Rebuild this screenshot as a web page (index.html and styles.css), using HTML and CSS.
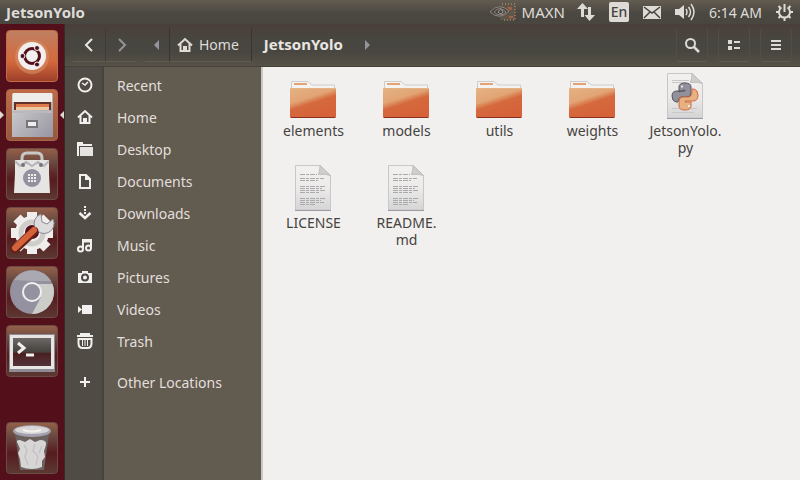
FILE: index.html
```html
<!DOCTYPE html>
<html lang="en">
<head>
<meta charset="utf-8">
<title>JetsonYolo</title>
<link rel="stylesheet" href="styles.css">
</head>
<body>
<svg class="defs" aria-hidden="true">
  <defs>
    <linearGradient id="fold" x1="0" y1="0" x2="0.5" y2="1">
      <stop offset="0" stop-color="#e5b284"/><stop offset=".42" stop-color="#e2a474"/><stop offset=".6" stop-color="#d5693d"/><stop offset="1" stop-color="#d5623a"/>
    </linearGradient>
    <linearGradient id="paper" x1="0" y1="0" x2="0" y2="1">
      <stop offset="0" stop-color="#f3f1f0"/><stop offset=".5" stop-color="#ecebea"/><stop offset="1" stop-color="#d6d5d6"/>
    </linearGradient>
    <linearGradient id="metal" x1="0" y1="0" x2="1" y2="1">
      <stop offset="0" stop-color="#d6d5d3"/><stop offset="1" stop-color="#9896a3"/>
    </linearGradient>
    <linearGradient id="term" x1="0" y1="0" x2="0" y2="1">
      <stop offset="0" stop-color="#6b6866"/><stop offset=".5" stop-color="#45423d"/><stop offset=".55" stop-color="#4a2020"/><stop offset="1" stop-color="#53323a"/>
    </linearGradient>
    <symbol id="folder" viewBox="0 0 48 48">
      <path d="M1.500 18V9.500H18l4 3.500H44.500V18" fill="#f4f3f2" stroke="#cfcdcb"/>
      <path d="M4 12h13" stroke="#e2a474" stroke-width="2"/>
      <rect x="0" y="16" width="46" height="30" rx="1" fill="url(#fold)"/>
      <path d="M1 45.500H45" stroke="#8a3020"/>
      <path d="M1 16.500H45" stroke="#e5b284"/>
    </symbol>
    <symbol id="sheet" viewBox="0 0 48 48">
      <path d="M5.500 1.500H30L40.500 11.500V46H5.500Z" fill="url(#paper)" stroke="#c9c7c7"/>
      <path d="M30 1.500q0 5-1.500 9q7-1 12 1Z" fill="#d0cecc" stroke="#c0bebd"/>
      <path d="M5 46.500H41" stroke="#9c9aa5"/>
    </symbol>
    <symbol id="textfile" viewBox="0 0 48 48">
      <use href="#sheet"/>
      <path d="M10 10.500H27M10 14.500H34M10 16.500H28M10 22.500H35M10 24.500H32M10 26.500H35M10 28.500H30M10 34.500H35M10 36.500H31M10 38.500H34M10 40.500H26" stroke="#aaa9ab" stroke-dasharray="5 1 3 1"/>
    </symbol>
    <symbol id="pyfile" viewBox="0 0 48 48">
      <use href="#sheet"/>
      <path d="M10 8.500H27M10 10.500H24M10 36.500H35M10 40.500H32" stroke="#c9c7c7"/>
      <path d="M17 20v-5q0-4 6-4t6 4v6q0 4-4 4h-5q-4 0-4 5h-2q-4-1-4-6 0-5 5-5h8v-1z" fill="#92909d" stroke="#57545a"/>
      <path d="M30 17h2q4 1 4 6 0 6-5 6h-8v1h6v4q0 4-6 4t-6-4v-5q0-4 4-4h5q4 0 4-5z" fill="#e5b284" stroke="#d5693d"/>
      <circle cx="20" cy="14.500" r="1" fill="#fff"/><circle cx="27" cy="34" r="1" fill="#fff"/>
    </symbol>
    <symbol id="house" viewBox="0 0 16 16">
      <path d="M1 8.500 8 2l7 6.500" fill="none" stroke="currentColor" stroke-width="2"/>
      <path d="M3.500 7v7h3.500v-4h2v4h3.500V7" fill="none" stroke="currentColor" stroke-width="2"/>
    </symbol>
  </defs>
</svg>

<header class="panel">
  <span class="panel-title">JetsonYolo</span>
  <div class="indicators">
    <svg class="nvidia" width="27" height="18" viewBox="0 0 27 18"><path d="M11 1h15v16H11z" fill="#5e554b"/><path d="M13 1h13v16H14" fill="none" stroke="#d99c70" stroke-dasharray="1 2"/><path d="M18 4h5v3h-3zM20 13h4v2h-4z" fill="#d5693d" opacity=".6"/><path d="M1 9Q10-1 20 8Q11 18 1 9ZM5 9Q11 2 17 9Q11 15 5 9Z" fill="#45423d" stroke="#928782"/><path d="M9 9q2-4 5-1-1 5-5 1" fill="none" stroke="#aaa09b"/></svg>
    <span class="power">MAXN</span>
    <svg class="network" width="18" height="18" viewBox="0 0 18 18"><path d="M5.500 0 11 6H7v8H4V6H0ZM12.500 18 7.500 12H11V4h3v8h4Z" fill="#dedbd7"/></svg>
    <span class="lang">En</span>
    <svg class="mail" width="18" height="13" viewBox="0 0 18 13"><path d="M0 0h18v13H0z" fill="#dedbd7"/><path d="m1 1 8 6 8-6M1 12l6-6M17 12l-6-6" fill="none" stroke="#45433e" stroke-width="1.500"/></svg>
    <svg class="sound" width="20" height="18" viewBox="0 0 20 18"><path d="M0 6h4l5-4v14l-5-4H0z" fill="#dedbd7"/><path d="M11 6q2 3 0 6M13.500 4q4 5 0 10M16 1q6 8 0 16" fill="none" stroke="#dedbd7" stroke-width="1.500"/></svg>
    <time>6:14 AM</time>
    <svg class="gear" width="17" height="18" viewBox="0 0 17 18"><path d="M5.500 4.500a5.500 5.500 0 1 0 6 0" fill="none" stroke="#dedbd7" stroke-width="2"/><path d="M8.500 1v8M0 9h3M14 9h3M8.500 14v4M2.500 3l2 2M14.500 3l-2 2M2.500 15l2-2M14.500 15l-2-2" stroke="#dedbd7" stroke-width="2"/></svg>
  </div>
</header>

<div class="desktop">
  <nav class="launcher" aria-label="Launcher">
    <button class="tile dash" aria-label="Search"><svg viewBox="0 0 52 52"><circle cx="26" cy="27" r="17" fill="#d99066" opacity=".6"/><circle cx="26" cy="26" r="14" fill="#f2f0ef"/><circle cx="26" cy="26" r="7.500" fill="none" stroke="#53101a" stroke-width="3"/><g fill="#53101a" stroke="#f2f0ef"><circle cx="16.500" cy="26" r="2.500"/><circle cx="31" cy="18" r="2.500"/><circle cx="31" cy="34.500" r="2.500"/></g></svg></button>
    <button class="tile files active" aria-label="Files"><svg viewBox="0 0 52 52"><path d="M6 6q0-2 2-2h37q2 0 2 2v42H6z" fill="url(#metal)"/><path d="M7 4h39v9H7z" fill="#efedeb"/><path d="M8 13h37v8H8z" fill="#63312b"/><path d="M10 15h33v5H10z" fill="#dd7b4b"/><path d="M10 18h33v3H10z" fill="#edc6a2"/><path d="M7 22h39v2H7z" fill="#bbb9bd"/><path d="M21 32h10v6H21z" fill="#efedeb" stroke="#77747a" stroke-width="2"/></svg></button>
    <button class="tile store" aria-label="Software"><svg viewBox="0 0 52 52"><path d="M16 16V10q0-5 5-5M36 16V10q0-5-5-5h-10" fill="none" stroke="#c9c7c7" stroke-width="3"/><path d="M9 12h34v13l1 20H8l1-20z" fill="#e7e5e3"/><path d="m9 13 5 5 6-4 6 4 6-4 6 4 5-5" fill="none" stroke="#b5b3b9" stroke-width="2"/><circle cx="17" cy="17" r="2" fill="#77747a"/><circle cx="35" cy="17" r="2" fill="#77747a"/><circle cx="26" cy="30" r="9" fill="#9391a0"/><path d="M22 26h2v2h-2zM25 26h2v2h-2zM28 26h2v2h-2zM22 29h2v2h-2zM25 29h2v2h-2zM28 29h2v2h-2zM22 32h2v2h-2zM25 32h2v2h-2zM28 32h2v2h-2z" fill="#f2f0ef"/></svg></button>
    <button class="tile settings" aria-label="System Settings"><svg viewBox="0 0 52 52"><g stroke="#f0eeec" stroke-width="10"><path d="M26 5v42M5 26h42M11 11l30 30M11 41 41 11"/></g><circle cx="26" cy="26" r="17" fill="#f0eeec"/><circle cx="26" cy="26" r="11" fill="none" stroke="#cfcdca" stroke-width="5"/><circle cx="26" cy="25" r="7" fill="#53101a"/><path d="m30 23 6-6" stroke="#c6c4ca" stroke-width="6"/><path d="M35 7a10 10 0 1 0 12 5l-6 5-5-2z" fill="#dddbdb" stroke="#8c8994"/><path d="M9 42 28 24" stroke="#672116" stroke-width="9" stroke-linecap="round"/><path d="M9 41 28 23" stroke="#d5623a" stroke-width="6" stroke-linecap="round"/></svg></button>
    <button class="tile browser" aria-label="Chromium"><svg viewBox="0 0 52 52"><circle cx="26" cy="26" r="22" fill="#9492a0"/><path d="M26 18h20.500A22 22 0 0 1 26 48l9-17z" fill="#ccccc8"/><path d="M8 14a22 22 0 0 1 37 1H26z" fill="#aaa8b0"/><circle cx="26" cy="26" r="9" fill="#94929f" stroke="#f2f0ef" stroke-width="2"/></svg></button>
    <button class="tile terminal" aria-label="Terminal"><svg viewBox="0 0 52 52"><path d="M3 9h46v38H3z" fill="#8e8b97"/><path d="M4 10h44v34H4z" fill="#e8e6e4"/><path d="M7 13h38v28H7z" fill="url(#term)"/><path d="m12 18 6 5-6 5M20 30h8" fill="none" stroke="#f2f0ef" stroke-width="3"/></svg></button>
    <button class="tile trash" aria-label="Trash"><svg viewBox="0 0 52 52"><path d="M9 12h34l-5 36H14z" fill="#6b625f"/><path d="M12 22q-3-4 2-4l5 2 5-3 5 3 5-2q7 0 6 5l-2 6 1 6-3 4v6q-10 4-21 0l-1-8-2-6 2-4z" fill="#d8d6d5"/><path d="m18 23 3 5-2 7 3 8M29 22l-2 7 5 5-2 9M36 24l-3 7" fill="none" stroke="#c4c2c6" stroke-width="1.500"/><ellipse cx="26" cy="9" rx="19" ry="6" fill="#a3a1ad"/><ellipse cx="26" cy="8" rx="17" ry="4" fill="#d7d5d6"/><path d="M17 8q9 3 18 0" fill="none" stroke="#f2f0ef" stroke-width="2"/></svg></button>
  </nav>

  <main class="window">
    <div class="toolbar">
      <button class="tool" aria-label="Back"><svg width="16" height="16" viewBox="0 0 16 16"><path d="m11 2-6 6 6 6" fill="none" stroke="#e9e6e2" stroke-width="2"/></svg></button>
      <button class="tool dim" aria-label="Forward"><svg width="16" height="16" viewBox="0 0 16 16"><path d="m5 2 6 6-6 6" fill="none" stroke="#96939c" stroke-width="2"/></svg></button>
      <div class="path">
        <button class="step" aria-label="Scroll left"><svg width="6" height="10" viewBox="0 0 6 10"><path d="M5 0v10L0 5z" fill="#96939c"/></svg></button>
        <button class="crumb"><svg width="16" height="16"><use href="#house"/></svg>Home</button>
        <button class="crumb current">JetsonYolo</button>
        <button class="step" aria-label="Scroll right"><svg width="6" height="10" viewBox="0 0 6 10"><path d="M1 0v10l5-5z" fill="#96939c"/></svg></button>
      </div>
      <div class="actions">
        <button class="tool" aria-label="Find"><svg width="16" height="16" viewBox="0 0 16 16"><circle cx="6.500" cy="6.500" r="4.500" fill="none" stroke="#dedbd7" stroke-width="2"/><path d="m10 10 5 5" stroke="#dedbd7" stroke-width="2.500"/></svg></button>
        <button class="tool" aria-label="List view"><svg width="14" height="16" viewBox="0 0 14 16"><path d="M1 3h4v4H1zM1 9h4v4H1zM7 4h6v2H7zM7 10h6v2H7z" fill="#dedbd7"/></svg></button>
        <button class="tool" aria-label="Menu"><svg width="12" height="16" viewBox="0 0 12 16"><path d="M1 4h10M1 8h10M1 12h10" stroke="#dedbd7" stroke-width="2"/></svg></button>
      </div>
    </div>

    <div class="body">
      <nav class="sidebar" aria-label="Places">
        <a href="#recent"><svg viewBox="0 0 16 16"><circle cx="8" cy="8" r="6.500" fill="none" stroke="#f2f0ef" stroke-width="2"/><path d="m5 6 3 2 3-3" fill="none" stroke="#f2f0ef" stroke-width="1.500"/></svg><span>Recent</span></a>
        <a href="#home"><svg><use href="#house"/></svg><span>Home</span></a>
        <a href="#desktop"><svg viewBox="0 0 16 16"><path d="M0 1h6v2h9v2H2v10H0z" fill="#f2f0ef"/><path d="M3 6h13v9H3z" fill="#e6e4e2"/></svg><span>Desktop</span></a>
        <a href="#documents"><svg viewBox="0 0 16 16"><path d="M3 2h6l4 4v9H3z" fill="none" stroke="#f2f0ef" stroke-width="2"/><path d="M8 1v6h6" fill="#f2f0ef"/></svg><span>Documents</span></a>
        <a href="#downloads"><svg viewBox="0 0 16 16"><path d="M8 1v9" stroke="#f2f0ef" stroke-width="2" stroke-dasharray="2 1"/><path d="m2.500 8 5.500 5 5.500-5" fill="none" stroke="#f2f0ef" stroke-width="2.500"/></svg><span>Downloads</span></a>
        <a href="#music"><svg viewBox="0 0 16 16"><path d="M6 12V3h8v8M6 4.500h8" fill="none" stroke="#f2f0ef" stroke-width="2"/><circle cx="3.500" cy="12" r="2.500" fill="none" stroke="#f2f0ef" stroke-width="2"/><circle cx="11.500" cy="11" r="2.500" fill="none" stroke="#f2f0ef" stroke-width="2"/></svg><span>Music</span></a>
        <a href="#pictures"><svg viewBox="0 0 16 16"><path d="M1 4h4V2h6v2h4v10H1z" fill="#f2f0ef"/><circle cx="8" cy="8.500" r="3" fill="#f2f0ef" stroke="#4c4944" stroke-width="2"/></svg><span>Pictures</span></a>
        <a href="#videos"><svg viewBox="0 0 16 16"><path d="M5 4h10v9H5zM1 5l4 3.500L1 12z" fill="#f2f0ef"/></svg><span>Videos</span></a>
        <a href="#trash"><svg viewBox="0 0 16 16"><path d="M0 3h16M3 1h10" stroke="#f2f0ef" stroke-width="2"/><path d="M1.500 6v4q0 5 4 5h5q4 0 4-5V6z" fill="none" stroke="#f2f0ef" stroke-width="2"/><path d="M5.500 7v6M8 7v6M10.500 7v6" stroke="#f2f0ef"/></svg><span>Trash</span></a>
        <a class="other" href="#other"><svg viewBox="0 0 16 16"><path d="M8 3v10M3 8h10" stroke="#f2f0ef" stroke-width="2"/></svg><span>Other Locations</span></a>
      </nav>

      <section class="files-grid" aria-label="Folder contents">
        <figure><svg><use href="#folder"/></svg><figcaption>elements</figcaption></figure>
        <figure><svg><use href="#folder"/></svg><figcaption>models</figcaption></figure>
        <figure><svg><use href="#folder"/></svg><figcaption>utils</figcaption></figure>
        <figure><svg><use href="#folder"/></svg><figcaption>weights</figcaption></figure>
        <figure><svg><use href="#pyfile"/></svg><figcaption>JetsonYolo.<wbr>py</figcaption></figure>
        <figure><svg><use href="#textfile"/></svg><figcaption>LICENSE</figcaption></figure>
        <figure><svg><use href="#textfile"/></svg><figcaption>README.<br>md</figcaption></figure>
      </section>
    </div>
  </main>
</div>
</body>
</html>
```
FILE: styles.css
```css
* { box-sizing: border-box; }

body {
  margin: 0;
  min-height: 100vh;
  display: flex;
  flex-direction: column;
  font: 14px/17px "Noto Sans", "Open Sans", sans-serif;
  color: #dfdcd8;
  background: #53101a;
}

button {
  font: inherit;
  color: inherit;
  padding: 0;
  border: 0;
  background: none;
}

svg { display: block; flex: none; }
.defs { position: absolute; width: 0; height: 0; }

.panel {
  height: 24px;
  padding: 0 7px 0 6px;
  display: flex;
  align-items: center;
  justify-content: space-between;
  background: linear-gradient(#625b50, #4b4842 55%, #494640);
}
.panel-title { font-size: 15px; font-weight: 700; }

.indicators { display: flex; align-items: center; gap: 14px; }
.power { margin: 0 -2px 0 -8px; font-size: 15px; }
.lang {
  width: 20px;
  height: 20px;
  border-radius: 2px;
  background: #dedbd7;
  color: #45433e;
  font-weight: 500;
  line-height: 20px;
  text-align: center;
}

.desktop { flex: 1; display: flex; }

.launcher {
  width: 65px;
  padding: 6px 7px 6px 6px;
  display: flex;
  flex-direction: column;
  gap: 7px;
  border-right: 1px solid #3c2a28;
}
.tile {
  position: relative;
  width: 52px;
  height: 52px;
  border-radius: 4px;
  border: 1px solid #6b4c44;
  background: linear-gradient(#94604a, #6b4a40 25%, #571b1f 60%, #5c3832);
}
.tile svg { width: 52px; height: 52px; margin: -1px; }
.dash { background: linear-gradient(#bf8061, #d5693d 60%, #9c4029); border-color: #c36a48; }
.files { background: linear-gradient(#bf6a48, #96583f); border-color: #a86549; }
.trash { margin-top: auto; }

.active::before, .active::after {
  content: "";
  position: absolute;
  top: 21px;
  border: 4px solid transparent;
}
.active::before { left: -7px; border-left-color: #dedbd7; border-right-width: 0; }
.active::after { right: -7px; border-right-color: #dedbd7; border-left-width: 0; }

.window { flex: 1; min-width: 0; display: flex; flex-direction: column; }

.toolbar {
  height: 43px;
  padding: 0 8px;
  display: flex;
  align-items: center;
  background: linear-gradient(#4a3f3a, #484640 40%, #484640 65%, #575147);
  border-bottom: 1px solid #45423d;
}
.tool, .step, .crumb {
  height: 34px;
  display: flex;
  align-items: center;
  justify-content: center;
  border-bottom: 1px solid #625b50;
}
.tool { width: 32px; }
.dim { border-left: 1px solid #45373a; }
.path { display: flex; margin-left: 8px; }
.step { width: 24px; }
.crumb { padding: 0 12px 0 7px; gap: 6px; border-left: 1px solid #403032; border-right: 1px solid #403032; }
.current { padding: 0 12px; font-size: 15px; font-weight: 700; color: #e9e6e2; border-left: 0; border-right: 0; }
.current, .current + .step { border-bottom-color: transparent; }
.actions { margin-left: auto; display: flex; gap: 10px; }
.actions .tool { border-left: 1px solid #524d45; border-right: 1px solid #524d45; border-radius: 3px; }

.body { flex: 1; display: flex; }

.sidebar {
  width: 198px;
  padding-top: 2px;
  border-right: 2px solid #cbc8c4;
  background: linear-gradient(90deg, #504c45 37px, #45433e 37px, #45433e 39px, #625b50 39px);
}
.sidebar a {
  height: 32px;
  padding-left: 12px;
  display: flex;
  align-items: center;
  gap: 24px;
  color: #e2dfdc;
  text-decoration: none;
}
.sidebar svg { width: 16px; height: 16px; color: #f2f0ef; }
.sidebar .other { margin-top: 9px; }

.files-grid {
  flex: 1;
  padding: 5px 4px;
  display: grid;
  grid-template-columns: repeat(auto-fill, 93px);
  grid-auto-rows: 84px;
  row-gap: 8px;
  align-content: start;
  background: #f2f0ef;
  color: #45433e;
}
figure { margin: 0; display: flex; flex-direction: column; align-items: center; gap: 2px; }
figure svg { width: 48px; height: 48px; }
figcaption { text-align: center; max-width: 84px; }
```
